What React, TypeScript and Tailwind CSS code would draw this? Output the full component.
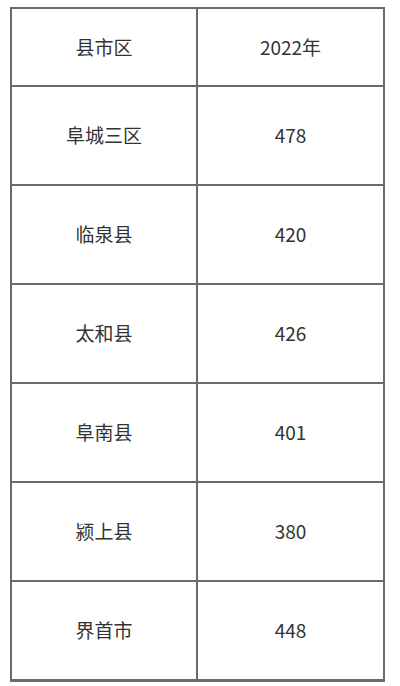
import React from "react";

const rows: [string, string][] = [
  ["阜城三区", "478"],
  ["临泉县", "420"],
  ["太和县", "426"],
  ["阜南县", "401"],
  ["颍上县", "380"],
  ["界首市", "448"],
];

export default function App() {
  return (
    <div
      className="bg-white w-[400px] h-[686px] pl-[10px] pt-[7px]"
      style={{ fontFamily: '"Noto Sans CJK SC", "Noto Sans", sans-serif' }}
    >
      <div className="w-[375px] border-2 border-b-[3px] border-[#6a6a6a] text-[#333333] text-[19px]">
        <div className="flex h-[78px] border-b-2 border-[#6a6a6a]">
          <div className="w-[186px] border-r-2 border-[#6a6a6a] flex items-center justify-center">县市区</div>
          <div className="flex-1 flex items-center justify-center">2022年</div>
        </div>
        {rows.map(([a, b], i) => (
          <div
            key={a}
            className={
              i < rows.length - 1
                ? "flex h-[99px] border-b-2 border-[#6a6a6a]"
                : "flex h-[97px]"
            }
          >
            <div className="w-[186px] border-r-2 border-[#6a6a6a] flex items-center justify-center">{a}</div>
            <div className="flex-1 flex items-center justify-center">{b}</div>
          </div>
        ))}
      </div>
    </div>
  );
}
